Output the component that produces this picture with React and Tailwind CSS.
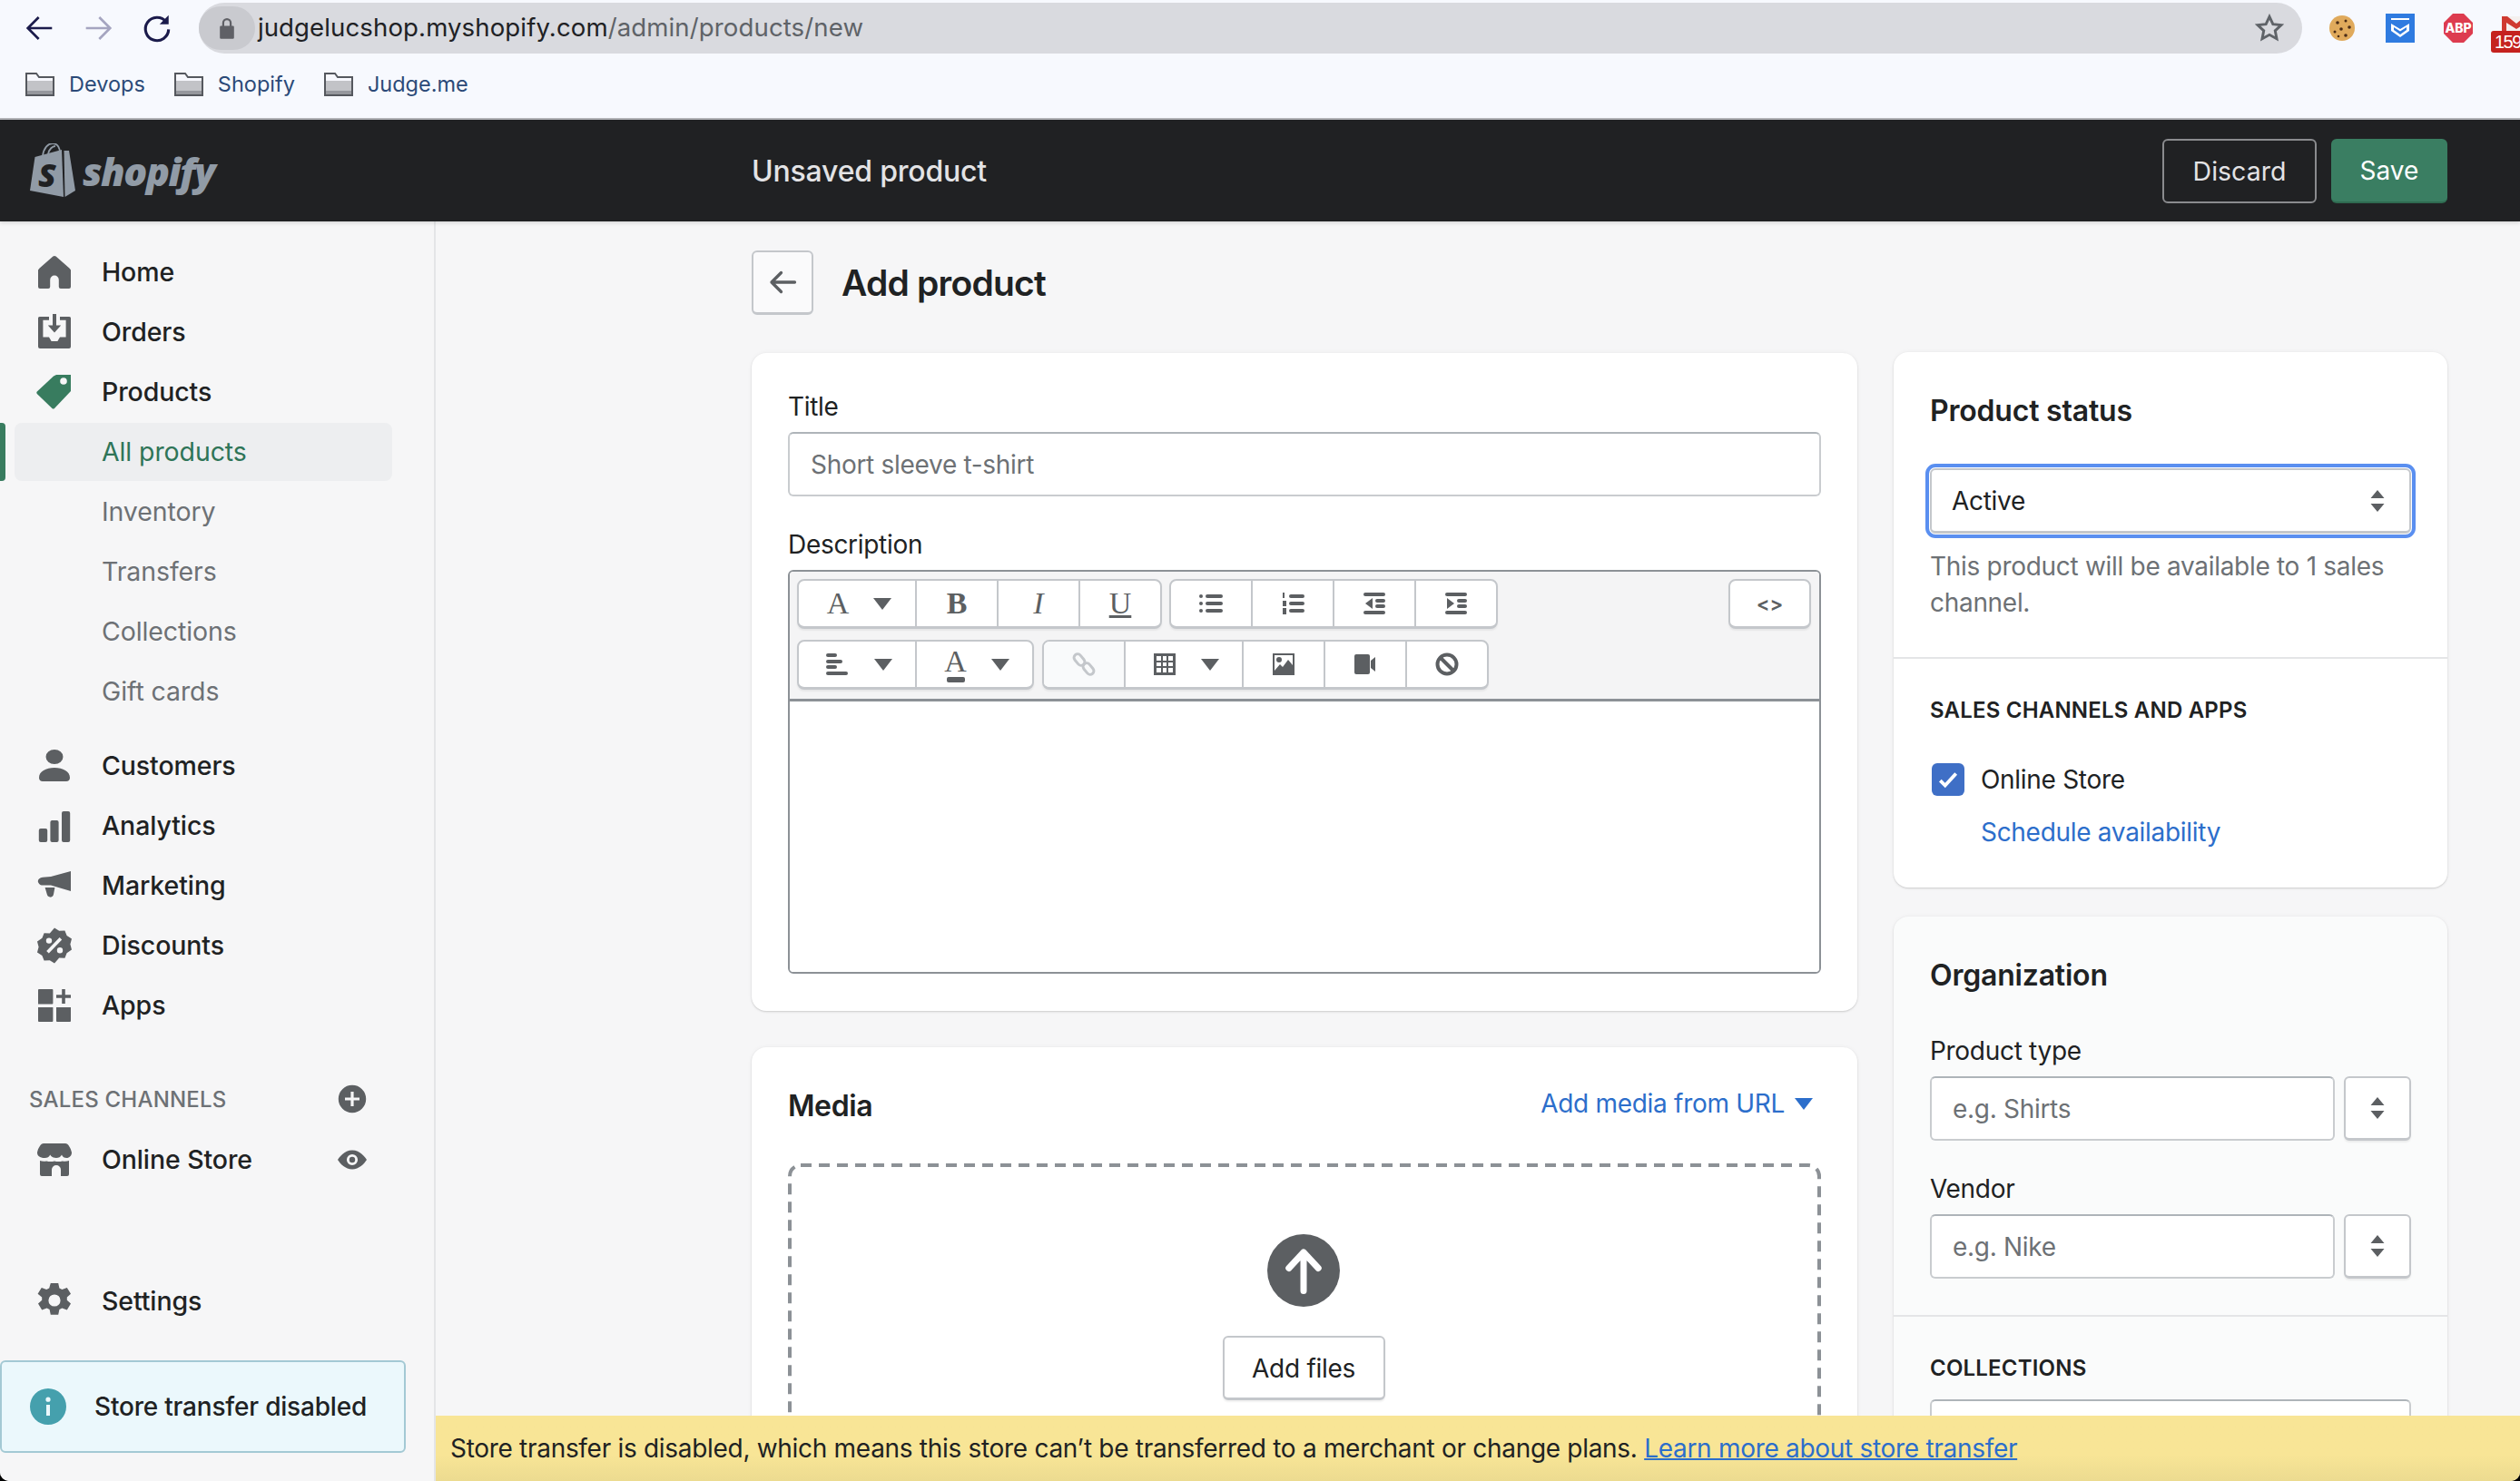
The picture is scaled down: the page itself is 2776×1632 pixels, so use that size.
import React from "react";

const G = "#5c5f62";
const Ico = ({ d, fill = G, size = 40, className = "" }) => (
  <svg width={size} height={size} viewBox="0 0 20 20" className={"shrink-0 " + className}>
    <path d={d} fill={fill} fillRule="evenodd" />
  </svg>
);

const P = {
  home: "M10 1l.8.3 7.4 6.4.8 1V18a1 1 0 0 1-1 1h-4.6a1 1 0 0 1-1-1v-3.8a2.4 2.4 0 0 0-4.8 0V18a1 1 0 0 1-1 1H2a1 1 0 0 1-1-1V8.700l.8-1L9.200 1.300z",
  orders: "M1.800 1.500H7v1.900H3.700v9.400H7l1.300 2.200h3.400L13 12.800h3.300V3.400H13V1.500h5.200a.8.8 0 0 1 .8.8V18a1 1 0 0 1-1 1H2a1 1 0 0 1-1-1V2.300a.8.8 0 0 1 .8-.8zM9 0h2v6.200h2.600L10 10.200 6.400 6.200H9z",
  tag: "M19 0.500v9l-9 9.500q-.7.5-1.300 0L.4 11q-.5-.6 0-1.200L9.500 1.300l1.500-.8zM15 2.100a1.900 1.900 0 1 0 0 3.800 1.900 1.900 0 0 0 0-3.800z",
  user: "M10 1a4.500 3.800 0 1 1 0 8 4.500 3.800 0 0 1 0-8zM1.500 16.500C1.500 13 5.300 11 10 11s8.500 2 8.500 5.500c0 1.300-.8 2-2 2h-13c-1.200 0-2-.7-2-2z",
  bars: "M2.400 11.500h2.700a1 1 0 0 1 1 1V18a1 1 0 0 1-1 1H2.400a1 1 0 0 1-1-1v-5.500a1 1 0 0 1 1-1zM8.700 7h2.600a1 1 0 0 1 1 1v10a1 1 0 0 1-1 1H8.700a1 1 0 0 1-1-1V8a1 1 0 0 1 1-1zM15 2h2.600a1 1 0 0 1 1 1v15a1 1 0 0 1-1 1H15a1 1 0 0 1-1-1V3a1 1 0 0 1 1-1z",
  mega: "M19 2v11l-11-3.200H3.500C2 9.800.9 8.500.9 7.500S2 5.600 3.500 5.400L8 5zM4.800 11h5.400l-.7 3.800c-.2 1.100-1 1.700-2 1.500-1-.2-1.400-.8-1.600-1.500z",
  disc: "M10 .2l2.600 1.700 3.100-.2 1.100 2.800 2.700 1.800-.8 3 .8 3-2.700 1.800-1.100 2.800-3.100-.2L10 19.800l-2.600-1.700-3.100.2-1.100-2.800L.5 13.700l.8-3-.8-3 2.700-1.800 1.100-2.800 3.100.2zM7 5.700a1.600 1.600 0 1 0 0 3.200 1.600 1.600 0 0 0 0-3.200zm5.800-.2L5.600 13l1.300 1.200 7.200-7.500zM13 11a1.600 1.600 0 1 0 0 3.200 1.600 1.600 0 0 0 0-3.200z",
  apps: "M1.500 1h7.200a.5.500 0 0 1 .5.500v7.200a.5.500 0 0 1-.5.500H1V1.500A.5.500 0 0 1 1.500 1zM1 11h8.200v7.500a.5.500 0 0 1-.5.500H1.500a.5.500 0 0 1-.5-.5zM11 11h8v7.500a.5.500 0 0 1-.5.500H11.500a.5.500 0 0 1-.5-.5zM14.100 1h1.800v3.100H19v1.800h-3.100V9h-1.800V5.900H11V4.100h3.100z",
  store: "M4 1h12c1.500 0 3 2.500 3.500 5 0 1.800-1.300 3-2.800 3-1.200 0-2.300-.7-2.700-1.800-.5 1.100-1.800 1.800-3 1.800s-2.900-.7-3.400-1.800C7.200 8.300 6 9 4.700 9 1.800 9 .5 7.800.5 6 1 3.500 2.500 1 4 1zM2 10.500c1 .4 2.300.6 3.600.2 1.200.4 3.200.4 4.400 0 1.200.4 3.200.4 4.400 0 1.300.4 2.600.2 3.600-.2V18a1 1 0 0 1-1 1h-3.500v-3.500a2.500 2.500 0 0 0-5 0V19H3a1 1 0 0 1-1-1z",
  gear: "M7.900 0h4.200l.6 2.700 1.500.8 2.700-1 2.100 3.400-2.100 1.800v1.700l2.100 1.900-2.100 3.400-2.700-1-1.500.8-.6 2.900H7.900l-.6-2.900-1.500-.8-2.700 1-2.100-3.400 2.100-1.900V7.700L.8 5.900l2.100-3.400 2.700 1 1.500-.8zM10 6.200a3.300 3.300 0 1 0 0 6.600 3.300 3.300 0 0 0 0-6.600z",
  plus: "M10 .5a9.500 9.500 0 1 1 0 19 9.500 9.500 0 0 1 0-19zM9 5v4H5v2h4v4h2v-4h4V9h-4V5z",
  eye: "M10 3.500c4.800 0 8 3.500 10 6.500-2 3-5.200 6.500-10 6.500S2 13 0 10c2-3 5.200-6.500 10-6.500zm0 2.700a3.800 3.800 0 1 0 0 7.600 3.800 3.800 0 0 0 0-7.600zm0 1.800a2 2 0 1 1 0 4 2 2 0 0 1 0-4z",
  info: "M10 0a10 10 0 1 1 0 20 10 10 0 0 1 0-20zM9 9v6h2V9zm1-4.200a1.300 1.300 0 1 0 0 2.600 1.300 1.300 0 0 0 0-2.600z",
  lock: "M10 1.500a4 4 0 0 1 4 4V8h1a1 1 0 0 1 1 1v9a1 1 0 0 1-1 1H5a1 1 0 0 1-1-1V9a1 1 0 0 1 1-1h1V5.500a4 4 0 0 1 4-4zM7.700 8h4.600V5.500a2.300 2.300 0 0 0-4.600 0z",
};

const NavRow = ({ icon, fill, children, right }) => (
  <div className="flex h-[66px] items-center pl-[40px] pr-[70px] text-[28.500px] font-medium tracking-[-0.1px] text-[#202223]">
    <Ico d={icon} fill={fill} />
    <span className="ml-[32px] flex-1 pt-[1px]">{children}</span>
    {right}
  </div>
);

const SubRow = ({ children }) => (
  <div className="flex h-[66px] items-center pl-[112px] pt-[1px] text-[28.500px] tracking-[-0.1px] text-[#6d7175]">{children}</div>
);

const Folder = () => (
  <svg width="32" height="26" viewBox="0 0 32 26" className="shrink-0">
    <path d="M1 1h11l3 4h16v20H1z" fill="#f7f8fd" stroke="#55585e" strokeWidth="2" />
    <rect x="2" y="9" width="28" height="15" fill="#c2c3c7" />
    <rect x="2" y="20" width="28" height="4" fill="#96989d" />
  </svg>
);

const Bookmark = ({ children }) => (
  <div className="flex items-center gap-[16px] text-[23.500px] text-[#2b4a78]">
    <Folder />
    <span>{children}</span>
  </div>
);

const Caret = ({ color = G, className = "" }) => (
  <svg width="22" height="15" viewBox="0 0 22 15" className={"shrink-0 " + className}>
    <path d="M1 1h20L11 14z" fill={color} />
  </svg>
);

const Updown = () => (
  <svg width="16" height="26" viewBox="0 0 16 26" className="shrink-0">
    <path d="M8 1l7.500 9H.5zM.5 16h15L8 25z" fill="#5c5f62" />
  </svg>
);

const Cell = ({ w, children, disabled, last, pad }) => (
  <div
    className={
      "flex h-full items-center justify-center gap-[26px] " +
      (pad ? "pl-[6px] " : "") +
      (disabled ? "bg-[#f9fafb] " : "") +
      (last ? "" : "border-r-2 border-[#c4c7cb] ")
    }
    style={{ width: w }}
  >
    {children}
  </div>
);

const Group = ({ children }) => (
  <div className="flex h-[55px] overflow-hidden rounded-[8px] border-2 border-[#c4c7cb] border-b-[3px] bg-white shadow-[0_2px_2px_rgba(0,0,0,0.06)]">
    {children}
  </div>
);

const L = ({ children, className = "" }) => (
  <span className={"font-['Liberation_Serif',serif] text-[34px] leading-none text-[#5c5f62] " + className}>{children}</span>
);

const ToolSvg = ({ children }) => (
  <svg width="26" height="26" viewBox="0 0 26 26" fill="#5c5f62" className="shrink-0">{children}</svg>
);

const Input = ({ placeholder, className = "" }) => (
  <div className={"flex h-[71px] items-center rounded-[6px] border-2 border-[#c9cccf] border-t-[#aeb4b9] bg-white px-[23px] text-[28px] tracking-[-0.3px] text-[#6d7175] " + className}>
    {placeholder}
  </div>
);

const ComboBtn = () => (
  <div className="flex h-[71px] w-[74px] shrink-0 items-center justify-center rounded-[6px] border-2 border-[#c4c7cb] border-b-[3px] bg-white shadow-[0_2px_2px_rgba(0,0,0,0.06)]">
    <Updown />
  </div>
);

const cardCls = "rounded-[16px] shadow-[0_0_5px_rgba(23,24,24,0.05),0_1px_2px_rgba(0,0,0,0.15)]";
const body = "text-[28px] leading-[40px] tracking-[-0.3px]";

export default function App() {
  return (
    <div className="h-[1632px] w-[2776px] overflow-hidden bg-black font-['Inter',sans-serif]">
      <div className="flex h-full flex-col overflow-hidden rounded-b-[10px] bg-[#f6f6f7]">
        {/* browser chrome */}
        <div className="h-[132px] shrink-0 border-b-2 border-[#b3b4b8] bg-[#f7f9fe]">
          <div className="flex h-[60px] items-center pt-[2px]">
            <svg width="32" height="32" viewBox="0 0 24 24" className="ml-[28px]" fill="none" stroke="#1b1b4b" strokeWidth="2"><path d="M22 12H3M11 3l-9 9 9 9" /></svg>
            <svg width="32" height="32" viewBox="0 0 24 24" className="ml-[32px]" fill="none" stroke="#a5a5c0" strokeWidth="2"><path d="M2 12h19M13 3l9 9-9 9" /></svg>
            <svg width="34" height="34" viewBox="0 0 24 24" className="ml-[32px]" fill="none" stroke="#1b1b4b" strokeWidth="2.200"><path d="M19 7A9 9 0 1 0 21 13" /><path d="M21 2v7h-7z" fill="#1b1b4b" stroke="none" /></svg>
            <div className="ml-[29px] flex h-[56px] w-[2319px] items-center rounded-full bg-[#d9dadf] pr-[20px]">
              <div className="flex h-[48px] w-[62px] items-center justify-center rounded-full bg-[#c9cacf]">
                <Ico d={P.lock} fill="#5f6066" size="26" />
              </div>
              <span className="ml-[3px] text-[27.600px] tracking-[0.1px] text-[#202124]">judgelucshop.myshopify.com<span className="text-[#5f6368]">/admin/products/new</span></span>
              <svg width="32" height="32" viewBox="0 0 24 24" className="ml-auto" fill="none" stroke="#5f6368" strokeWidth="2.200"><path d="M12 2.500l2.900 6.200 6.800.8-5 4.600 1.300 6.700-6-3.300-6 3.300 1.300-6.700-5-4.600 6.800-.8z" /></svg>
            </div>
            {/* extensions */}
            <svg width="30" height="30" viewBox="0 0 30 30" className="ml-[29px] shrink-0">
              <circle cx="15" cy="15" r="14" fill="#e0aa5c" />
              <circle cx="10" cy="9" r="1.800" fill="#4a2c16" /><circle cx="19" cy="7" r="1.500" fill="#4a2c16" /><circle cx="23" cy="14" r="1.800" fill="#4a2c16" /><circle cx="14" cy="16" r="1.800" fill="#4a2c16" /><circle cx="7" cy="19" r="1.500" fill="#4a2c16" /><circle cx="19" cy="23" r="1.800" fill="#4a2c16" /><circle cx="11" cy="24" r="1.300" fill="#4a2c16" />
            </svg>
            <svg width="32" height="32" viewBox="0 0 32 32" className="ml-[33px] shrink-0">
              <rect width="32" height="32" fill="#2f7be0" />
              <path d="M6 5h20v2H6zM6 11l10 6 10-6v8l-10 7-10-7z" fill="#fff" />
              <path d="M9 15l7 4.500 7-4.500v3l-7 5-7-5z" fill="#2f7be0" />
            </svg>
            <svg width="32" height="32" viewBox="0 0 32 32" className="ml-[32px] shrink-0">
              <path d="M10 0h12l10 10v12L22 32H10L0 22V10z" fill="#dd3c4f" />
              <text x="16" y="21" textAnchor="middle" fontSize="14" fontWeight="800" fill="#fff" fontFamily="Inter">ABP</text>
            </svg>
            <div className="relative ml-[20px] h-[60px] w-[32px] shrink-0">
              <svg width="32" height="16" viewBox="0 0 32 16" className="absolute left-[12px] top-[17px]">
                <rect width="32" height="16" fill="#f4f0ef" />
                <path d="M0 0h6l10 8 10-8h6v16h-5V7l-11 7L5 7v9H0z" fill="#cf3a31" />
              </svg>
              <div className="absolute left-0 top-[33px] flex h-[24px] w-[32px] items-center rounded-l-[3px] bg-[#c5221f] pl-[4px] font-['Liberation_Sans',sans-serif] text-[20px] tracking-[-1.500px] text-white">159</div>
            </div>
          </div>
          <div className="flex h-[68px] items-center gap-[32px] pb-[2px] pl-[28px]">
            <Bookmark>Devops</Bookmark>
            <Bookmark>Shopify</Bookmark>
            <Bookmark>Judge.me</Bookmark>
          </div>
        </div>

        {/* top bar */}
        <div className="relative z-10 flex h-[112px] shrink-0 items-center bg-[#202123] pr-[80px] shadow-[0_2px_4px_rgba(0,0,0,0.12)]">
          <div className="flex w-[828px] items-center pl-[33px]">
            <svg width="50" height="60" viewBox="0 0 50 60" className="shrink-0">
              <path d="M0 52L5.500 15 35 7l2 52z" fill="#919ba6" />
              <path d="M37.500 8H43l7 44-11.500 7z" fill="#919ba6" />
              <path d="M14 14C15 5 20 0 25 0c6 0 8 6 8 10M20 12c1-6 5-9 8-9" fill="none" stroke="#919ba6" strokeWidth="1.800" />
              <text x="9" y="48" fontFamily="'Open Sans'" fontStyle="italic" fontWeight="800" fontSize="36" fill="#202123">S</text>
            </svg>
            <span className="ml-[8px] font-['Open_Sans',sans-serif] text-[43px] font-extrabold italic leading-none tracking-[-1.500px] text-[#919ba6]">shopify</span>
          </div>
          <span className="pt-[2px] text-[32px] font-medium tracking-[-0.2px] text-[#e3e3e5]">Unsaved product</span>
          <div className="ml-auto flex gap-[16px]">
            <div className="flex h-[71px] w-[170px] items-center justify-center rounded-[6px] border-2 border-[#8a8b8e] pt-[2px] text-[28.500px] text-[#e3e3e5]">Discard</div>
            <div className="flex h-[71px] w-[128px] items-center justify-center rounded-[6px] border-b-2 border-[#2f6a50] bg-[#3a7e62] pt-[2px] text-[28px] text-white">Save</div>
          </div>
        </div>

        <div className="flex min-h-0 flex-1">
          {/* sidebar */}
          <aside className="flex w-[480px] shrink-0 flex-col border-r-2 border-[#e4e5e7] bg-[#f6f6f7] pb-[31px] pt-[23px]">
            <NavRow icon={P.home}>Home</NavRow>
            <NavRow icon={P.orders}>Orders</NavRow>
            <NavRow icon={P.tag} fill="#387c5f">Products</NavRow>
            <div className="relative flex h-[66px] items-center">
              <div className="absolute left-0 top-px h-[64px] w-[6px] rounded-r-[4px] bg-[#387c5f]" />
              <div className="ml-[16px] flex h-[64px] w-[416px] items-center rounded-[8px] bg-[#edeef0] pl-[96px] pt-[1px] text-[28.500px] tracking-[-0.1px] text-[#2f7558]">All products</div>
            </div>
            <SubRow>Inventory</SubRow>
            <SubRow>Transfers</SubRow>
            <SubRow>Collections</SubRow>
            <SubRow>Gift cards</SubRow>
            <div className="mt-[16px]">
              <NavRow icon={P.user}>Customers</NavRow>
              <NavRow icon={P.bars}>Analytics</NavRow>
              <NavRow icon={P.mega}>Marketing</NavRow>
              <NavRow icon={P.disc}>Discounts</NavRow>
              <NavRow icon={P.apps}>Apps</NavRow>
            </div>
            <div className="mt-[53px] flex h-[34px] items-center pl-[32px] pr-[74px] text-[24px] font-medium tracking-[0.2px] text-[#6d7175]">
              <span className="flex-1 pt-[2px]">SALES CHANNELS</span>
              <Ico d={P.plus} size="32" />
            </div>
            <div className="mt-[17px]">
              <NavRow icon={P.store} right={<Ico d={P.eye} size="32" className="mr-[4px]" />}>Online Store</NavRow>
            </div>
            <div className="mt-auto">
              <NavRow icon={P.gear}>Settings</NavRow>
            </div>
            <div className="mt-[32px] flex h-[102px] w-[447px] items-center rounded-[6px] border-2 border-[#a3c9d4] bg-[#ebf8fc] pl-[31px] text-[28px] font-medium tracking-[-0.2px] text-[#202223]">
              <Ico d={P.info} fill="#45a0ad" />
              <span className="ml-[31px] whitespace-nowrap">Store transfer disabled</span>
            </div>
          </aside>

          {/* main */}
          <main className="flex min-w-0 flex-1 flex-col">
            <div className="min-h-0 flex-1 overflow-hidden pl-[348px] pr-[80px] pt-[32px]">
              <div className="flex h-[71px] items-center">
                <div className="flex h-[71px] w-[68px] items-center justify-center rounded-[6px] border-2 border-[#c4c7cb] border-b-[3px] bg-[#fafafb]">
                  <svg width="36" height="36" viewBox="0 0 24 24" fill="none" stroke="#5c5f62" strokeWidth="2.200" strokeLinecap="round" strokeLinejoin="round"><path d="M21 12H4M11 5l-7 7 7 7" /></svg>
                </div>
                <h1 className="ml-[31px] pt-[2px] text-[39px] font-semibold tracking-[-0.8px] text-[#202223]">Add product</h1>
              </div>

              <div className="mt-[42px] grid grid-cols-[1218px_610px] gap-x-[40px]">
                <div className="flex flex-col gap-[40px]">
                  <section className={cardCls + " bg-white px-[40px] pb-[41px] pt-[39px]"}>
                    <div className={body + " text-[#202223]"}>Title</div>
                    <Input className="mt-[8px]" placeholder="Short sleeve t-shirt" />
                    <div className={body + " mt-[33px] text-[#202223]"}>Description</div>
                    <div className="mt-[8px] overflow-hidden rounded-[6px] border-2 border-[#8c9196]">
                      <div className="h-[143px] border-b-[3px] border-[#8c9196] bg-[#f4f4f5] pl-[8px] pr-[8px] pt-[8px]">
                        <div className="flex gap-[8px]">
                          <Group>
                            <Cell w={130} pad><L>A</L><Caret /></Cell>
                            <Cell w={90}><L className="font-bold">B</L></Cell>
                            <Cell w={90}><L className="italic">I</L></Cell>
                            <Cell w={88} last><L className="underline decoration-[3px] underline-offset-[2px]">U</L></Cell>
                          </Group>
                          <Group>
                            <Cell w={90}>
                              <ToolSvg><rect x="7" y="3" width="19" height="4" rx="2" /><rect x="7" y="11" width="19" height="4" rx="2" /><rect x="7" y="19" width="19" height="4" rx="2" /><circle cx="2" cy="5" r="2" /><circle cx="2" cy="13" r="2" /><circle cx="2" cy="21" r="2" /></ToolSvg>
                            </Cell>
                            <Cell w={90}>
                              <ToolSvg><rect x="9" y="3" width="17" height="4" rx="2" /><rect x="9" y="11" width="17" height="4" rx="2" /><rect x="9" y="19" width="17" height="4" rx="2" /><rect x="2" y="1" width="2" height="6" /><rect x="2" y="10" width="4" height="6" /><rect x="2" y="18" width="4" height="7" /></ToolSvg>
                            </Cell>
                            <Cell w={90}>
                              <ToolSvg><rect x="1" y="1" width="24" height="4" rx="2" /><rect x="1" y="21" width="24" height="4" rx="2" /><rect x="14" y="8" width="11" height="4" rx="2" /><rect x="14" y="14" width="11" height="4" rx="2" /><path d="M11 7v12l-8-6z" /></ToolSvg>
                            </Cell>
                            <Cell w={88} last>
                              <ToolSvg><rect x="1" y="1" width="24" height="4" rx="2" /><rect x="1" y="21" width="24" height="4" rx="2" /><rect x="14" y="8" width="11" height="4" rx="2" /><rect x="14" y="14" width="11" height="4" rx="2" /><path d="M3 7v12l8-6z" /></ToolSvg>
                            </Cell>
                          </Group>
                          <div className="ml-auto mr-[1px]">
                            <div className="flex h-[55px] w-[91px] items-center justify-center rounded-[8px] border-2 border-[#c4c7cb] border-b-[3px] bg-white text-[22px] font-semibold text-[#5c5f62] shadow-[0_2px_2px_rgba(0,0,0,0.06)]">&lt;&gt;</div>
                          </div>
                        </div>
                        <div className="mt-[12px] flex gap-[9px]">
                          <Group>
                            <Cell w={130} pad>
                              <ToolSvg><rect x="0" y="1" width="12" height="4" rx="2" /><rect x="0" y="8" width="18" height="4" rx="2" /><rect x="0" y="14" width="12" height="4" rx="2" /><rect x="0" y="21" width="24" height="4" rx="2" /></ToolSvg>
                              <Caret />
                            </Cell>
                            <Cell w={127} last pad>
                              <span className="flex flex-col items-center"><L className="text-[26px] leading-[24px]">A</L><span className="h-[6px] w-[20px] rounded-[2px] bg-[#5c5f62]" /></span>
                              <Caret />
                            </Cell>
                          </Group>
                          <Group>
                            <Cell w={90} disabled>
                              <svg width="26" height="26" viewBox="0 0 26 26" fill="none" stroke="#c4c7cb" strokeWidth="3" className="shrink-0"><rect x="-7" y="-4" width="14" height="8" rx="4" transform="translate(8 8) rotate(50)" /><rect x="-7" y="-4" width="14" height="8" rx="4" transform="translate(18 18) rotate(50)" /></svg>
                            </Cell>
                            <Cell w={130} pad>
                              <ToolSvg><path fillRule="evenodd" d="M1 1h24v24H1zM4 4v5h5V4zm7 0v5h4V4zm6 0v5h5V4zM4 11v4h5v-4zm7 0v4h4v-4zm6 0v4h5v-4zM4 17v5h5v-5zm7 0v5h4v-5zm6 0v5h5v-5z" /></ToolSvg>
                              <Caret />
                            </Cell>
                            <Cell w={90}>
                              <ToolSvg><path fillRule="evenodd" d="M1 1h24v24H1zM3 3v17l6-7 3 3 6-8 5 6V3zM8 5a3 3 0 1 1 0 6 3 3 0 0 1 0-6z" /></ToolSvg>
                            </Cell>
                            <Cell w={90}>
                              <ToolSvg><rect x="1" y="2" width="17" height="22" rx="2" /><path d="M19 9l5-4v16l-5-4z" /></ToolSvg>
                            </Cell>
                            <Cell w={88} last>
                              <svg width="26" height="26" viewBox="0 0 26 26" fill="none" stroke="#5c5f62" strokeWidth="4" className="shrink-0"><circle cx="13" cy="13" r="10.500" /><path d="M6 6l14 14" /></svg>
                            </Cell>
                          </Group>
                        </div>
                      </div>
                      <div className="h-[298px] bg-white" />
                    </div>
                  </section>

                  <section className={cardCls + " bg-white px-[40px] pt-[41px]"}>
                    <div className="flex h-[48px] items-center justify-between">
                      <h2 className="text-[32px] font-semibold tracking-[-0.4px] text-[#202223]">Media</h2>
                      <div className={body + " -mt-[6px] mr-[8px] flex items-center gap-[10px] text-[#2c6ecb]"}>
                        Add media from URL <Caret color="#2c6ecb" />
                      </div>
                    </div>
                    <div className="relative mt-[39px] flex h-[440px] flex-col items-center pr-[2px] pt-[78px]">
                      <svg width="1138" height="440" className="absolute left-0 top-0" fill="none">
                        <rect x="2" y="2" width="1134" height="436" rx="12" stroke="#8c9196" strokeWidth="4" strokeDasharray="12 8" />
                      </svg>
                      <div className="flex h-[80px] w-[80px] items-center justify-center rounded-full bg-[#5c5f62]">
                        <svg width="60" height="60" viewBox="0 0 24 24" fill="none" stroke="#fff" strokeWidth="2.800" strokeLinecap="round" strokeLinejoin="round"><path d="M12 21V4M5.500 11L12 4l6.500 7" /></svg>
                      </div>
                      <div className={"mt-[32px] flex h-[71px] w-[179px] items-center justify-center rounded-[6px] border-2 border-[#c4c7cb] border-b-[3px] bg-white pt-[2px] text-[#202223] shadow-[0_2px_2px_rgba(0,0,0,0.06)] " + body}>Add files</div>
                    </div>
                  </section>
                </div>

                <div className="-mt-px flex flex-col gap-[32px]">
                  <section className={cardCls + " bg-white"}>
                    <div className="border-b-2 border-[#e4e5e7] px-[40px] pb-[40px] pt-[41px]">
                      <h2 className="text-[32px] font-semibold leading-[48px] tracking-[-0.2px] text-[#202223]">Product status</h2>
                      <div className={"mt-[39px] flex h-[72px] items-center justify-between rounded-[6px] border-2 border-[#c4c7cb] border-b-[3px] bg-white pl-[22px] pr-[27px] text-[#202223] outline-4 outline-offset-1 outline-[#5a8ff0] " + body}>
                        Active <Updown />
                      </div>
                      <p className={body + " mt-[16px] text-[#6d7175]"}>This product will be available to 1 sales channel.</p>
                    </div>
                    <div className="px-[40px] pb-[41px] pt-[41px]">
                      <h3 className="text-[24px] font-semibold leading-[32px] tracking-[0.2px] text-[#202223]">SALES CHANNELS AND APPS</h3>
                      <div className={body + " mt-[40px] flex h-[40px] items-center pl-[2px] text-[#202223]"}>
                        <div className="flex h-[36px] w-[36px] items-center justify-center rounded-[6px] bg-[#3f6fc6]">
                          <svg width="26" height="26" viewBox="0 0 24 24" fill="none" stroke="#fff" strokeWidth="3.500"><path d="M4 13l5 5L20 6" /></svg>
                        </div>
                        <span className="ml-[18px]">Online Store</span>
                      </div>
                      <div className={body + " mt-[18px] pl-[56px] text-[#2c6ecb]"}>Schedule availability</div>
                    </div>
                  </section>

                  <section className={cardCls + " bg-[#fafbfb]"}>
                    <div className="border-b-2 border-[#e4e5e7] px-[40px] pb-[40px] pt-[41px]">
                      <h2 className="text-[32px] font-semibold leading-[48px] tracking-[-0.2px] text-[#202223]">Organization</h2>
                      <div className={body + " mt-[39px] text-[#202223]"}>Product type</div>
                      <div className="mt-[8px] flex gap-[10px]">
                        <Input className="flex-1" placeholder="e.g. Shirts" />
                        <ComboBtn />
                      </div>
                      <div className={body + " mt-[33px] text-[#202223]"}>Vendor</div>
                      <div className="mt-[8px] flex gap-[10px]">
                        <Input className="flex-1" placeholder="e.g. Nike" />
                        <ComboBtn />
                      </div>
                    </div>
                    <div className="px-[40px] pb-[39px] pt-[41px]">
                      <h3 className="text-[24px] font-semibold leading-[32px] tracking-[0.2px] text-[#202223]">COLLECTIONS</h3>
                      <Input className="mt-[18px]" placeholder="" />
                    </div>
                  </section>
                </div>
              </div>
            </div>

            <div className="z-10 flex h-[72px] shrink-0 items-center whitespace-pre bg-gradient-to-b from-[#f8e596] from-60% to-[#ecdb90] pl-[16px] text-[28px] tracking-[-0.3px] text-[#202223]">
              Store transfer is disabled, which means this store can’t be transferred to a merchant or change plans.{" "}
              <span className="text-[#2c6ecb] underline decoration-2">Learn more about store transfer</span>
            </div>
          </main>
        </div>
      </div>
    </div>
  );
}
